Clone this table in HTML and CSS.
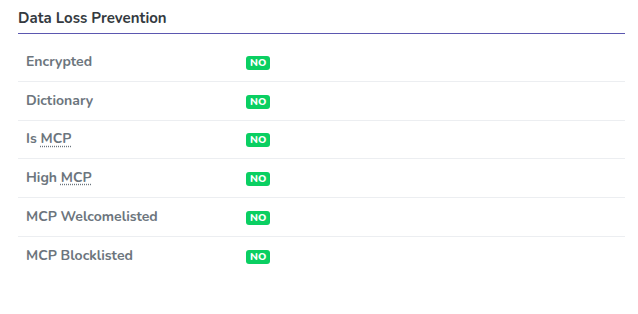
FILE: index.html
```html
<!DOCTYPE html>
<html>
<head>
<meta charset="utf-8">
<link rel="stylesheet" href="styles.css">
</head>
<body>
<section class="panel">
  <h2 class="title">Data Loss Prevention</h2>
  <table class="dlp">
    <tr><th>Encrypted</th><td><span class="badge">NO</span></td></tr>
    <tr><th>Dictionary</th><td><span class="badge">NO</span></td></tr>
    <tr><th>Is <abbr title="Monitored Content Policy">MCP</abbr></th><td><span class="badge">NO</span></td></tr>
    <tr><th>High <abbr title="Monitored Content Policy">MCP</abbr></th><td><span class="badge">NO</span></td></tr>
    <tr><th>MCP Welcomelisted</th><td><span class="badge">NO</span></td></tr>
    <tr><th>MCP Blocklisted</th><td><span class="badge">NO</span></td></tr>
  </table>
</section>
</body>
</html>
```
FILE: styles.css
```css
html, body { margin: 0; padding: 0; background: #fff; }
body { font-family: "Nunito", "Open Sans", "Noto Sans", sans-serif; }
.panel { padding: 8px 13px 0 18px; }
.title {
  margin: 0;
  font-size: 15px;
  font-weight: 700;
  color: #343a40;
  line-height: 20px;
  padding-bottom: 5px;
  border-bottom: 1px solid #5b57b0;
}
.dlp { width: 100%; border-collapse: collapse; margin-top: 9px; }
.dlp th, .dlp td {
  font-size: 14px;
  line-height: 20px;
  padding: 8.875px 8px;
  text-align: left;
  vertical-align: middle;
  border-top: 1px solid #eceef1;
}
.dlp tr:first-child th, .dlp tr:first-child td { border-top: none; }
.dlp th { width: 204px; font-weight: 700; color: #6c757d; }
abbr { text-decoration: underline dotted; text-underline-offset: 2px; cursor: help; }
.badge {
  display: inline-block;
  background: #0acf62;
  color: #fff;
  font-size: 10.5px;
  font-weight: 800;
  line-height: 14px;
  padding: 0 4px;
  border-radius: 3px;
}
```
